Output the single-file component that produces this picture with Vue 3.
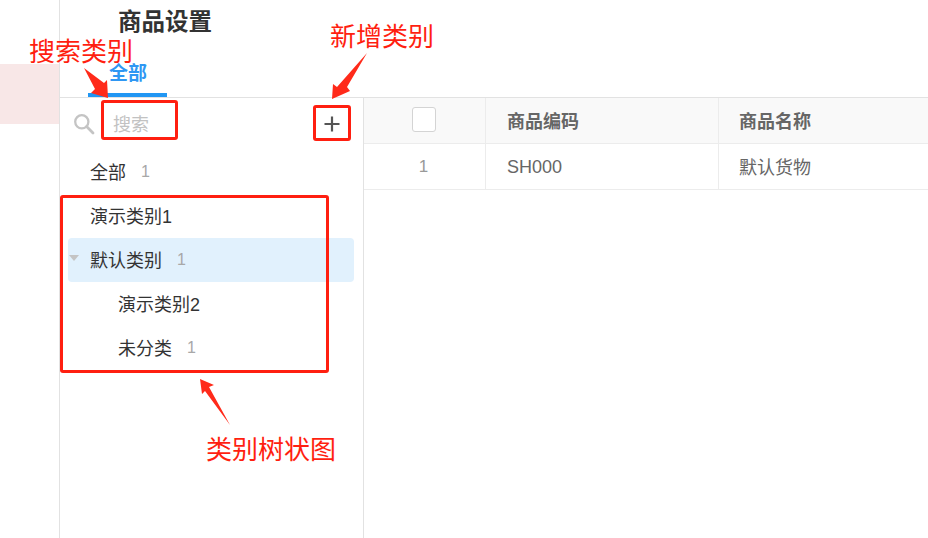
<script setup>
const tree = [
  { name: '全部', count: 1, level: 0 },
  { name: '演示类别1', level: 0 },
  { name: '默认类别', count: 1, level: 0, active: true, open: true },
  { name: '演示类别2', level: 1 },
  { name: '未分类', count: 1, level: 1 },
];
</script>

<template>
  <div class="page">
    <aside class="rail">
      <div class="rail-mark"></div>
    </aside>

    <main class="main">
      <header class="head">
        <h1 class="title">商品设置</h1>
        <nav class="tabs">
          <span class="tab">全部</span>
        </nav>
      </header>

      <div class="body">
        <section class="side">
          <div class="search">
            <svg class="search-icon" width="22" height="22" viewBox="0 0 22 22">
              <circle cx="7.8" cy="7.8" r="6.6" fill="none" stroke="#c4c4c4" stroke-width="2.3" />
              <path d="M12.6 12.6 L19 19" stroke="#c4c4c4" stroke-width="2.8" stroke-linecap="round" />
            </svg>
            <span class="search-text">搜索</span>
            <svg class="plus" width="16" height="16" viewBox="0 0 16 16">
              <path d="M8 0.5V15.5M0.5 8H15.5" stroke="#555" stroke-width="2.2" />
            </svg>
          </div>

          <ul class="tree">
            <li
              v-for="item in tree"
              :key="item.name"
              class="node"
              :class="{ active: item.active, child: item.level === 1 }"
            >
              <i v-if="item.open" class="caret"></i>
              <span class="node-name">{{ item.name }}</span>
              <span v-if="item.count" class="node-count">{{ item.count }}</span>
            </li>
          </ul>
        </section>

        <section class="table">
          <div class="row row-head">
            <div class="cell cell-check"><span class="checkbox"></span></div>
            <div class="cell cell-code">商品编码</div>
            <div class="cell cell-name">商品名称</div>
          </div>
          <div class="row">
            <div class="cell cell-check cell-index">1</div>
            <div class="cell cell-code cell-sku">SH000</div>
            <div class="cell cell-name">默认货物</div>
          </div>
        </section>
      </div>
    </main>

    <!-- red notes drawn on top of the screenshot -->
    <div class="note-box box-search"></div>
    <div class="note-box box-add"></div>
    <div class="note-box box-tree"></div>
    <span class="note note-search">搜索类别</span>
    <span class="note note-add">新增类别</span>
    <span class="note note-tree">类别树状图</span>
    <svg class="arrows" width="928" height="538" viewBox="0 0 928 538">
      <path d="M84 68 L104 83 L107 80 L108 98 L91 93 L95 89 Z" fill="#ff2a1a" />
      <path d="M367 53 L347 87 L350 91 L332 99 L333 84 L337 87 Z" fill="#ff2a1a" />
      <path d="M200 379 L214 385 L209 387 L230 425 L205 391 L202 394 Z" fill="#ff2a1a" />
    </svg>
  </div>
</template>

<style>
html,
body {
  margin: 0;
  background: #fff;
}
</style>

<style scoped>
.page {
  position: relative;
  display: flex;
  width: 928px;
  height: 538px;
  overflow: hidden;
  background: #fff;
  color: #333;
  font-family: "Liberation Sans", "Noto Sans CJK SC", sans-serif;
  font-size: 16px;
}

.rail {
  flex: none;
  width: 59px;
  padding-top: 64px;
  border-right: 1px solid #e2e2e2;
}

.rail-mark {
  height: 60px;
  background: #f8e7e7;
}

.main {
  flex: 1;
  display: flex;
  flex-direction: column;
  min-width: 0;
}

.head {
  flex: none;
  height: 97px;
  border-bottom: 1px solid #e2e2e2;
  display: flex;
  flex-direction: column;
}

.title {
  margin: 7px 0 0 58px;
  font-size: 23.5px;
  line-height: 30px;
  font-weight: 700;
  color: #333;
}

.tabs {
  margin-top: auto;
  margin-left: 28px;
}

.tab {
  display: block;
  width: 79px;
  height: 33px;
  padding-left: 21px;
  box-sizing: border-box;
  border-bottom: 4px solid #2196f3;
  font-size: 19px;
  line-height: 20px;
  font-weight: 700;
  color: #2f97f3;
}

.body {
  flex: 1;
  display: flex;
  min-height: 0;
}

.side {
  flex: none;
  width: 303px;
  border-right: 1px solid #e2e2e2;
}

.search {
  display: flex;
  align-items: center;
  height: 52px;
  padding: 0 14px;
}

.search-icon {
  flex: none;
  margin-top: 1px;
}

.search-text {
  margin-left: 17px;
  padding-bottom: 3px;
  font-size: 18px;
  color: #c2c2c2;
}

.plus {
  margin-left: auto;
  margin-right: 9px;
}

.tree {
  list-style: none;
  margin: 0;
  padding: 0 9px 0 8px;
}

.node {
  position: relative;
  display: flex;
  align-items: center;
  height: 44px;
  padding-left: 22px;
  padding-bottom: 2px;
  box-sizing: border-box;
  font-size: 18px;
  color: #333;
}

.node.child {
  padding-left: 50px;
}

.node.active {
  background: #e1f1fd;
  border-radius: 4px;
}

.caret {
  position: absolute;
  left: 1px;
  top: 17px;
  width: 0;
  height: 0;
  border-left: 5.5px solid transparent;
  border-right: 5.5px solid transparent;
  border-top: 6px solid #c4c4c4;
}

.node-count {
  margin-left: 15px;
  padding-top: 2px;
  font-size: 16px;
  color: #a8a8a8;
}

.table {
  flex: 1;
  min-width: 0;
}

.row {
  display: flex;
  height: 45px;
  border-bottom: 1px solid #ececec;
  color: #666;
}

.row-head {
  background: #f9f9f9;
  font-weight: 700;
}

.row-head .cell-code,
.cell-name {
  padding-bottom: 2px;
}

.cell {
  display: flex;
  align-items: center;
  padding-left: 21px;
  font-size: 18px;
}

.cell-check {
  width: 119px;
  padding-left: 0;
  padding-right: 2px;
  justify-content: center;
  border-right: 1px solid #ececec;
}

.cell-index {
  padding-top: 1px;
  font-size: 17px;
  color: #999;
}

.cell-sku {
  padding-top: 1px;
}

.checkbox {
  display: block;
  width: 22px;
  height: 23px;
  margin-top: -2px;
  background: #fff;
  border: 1px solid #d4d4d4;
  border-radius: 3px;
}

.cell-code {
  width: 211px;
  border-right: 1px solid #ececec;
}

.cell-name {
  flex: 1;
  padding-left: 20px;
}

.note-box {
  position: absolute;
  box-sizing: border-box;
  border: 3px solid #ff1f10;
  border-radius: 3px;
}

.box-search {
  left: 101px;
  top: 100px;
  width: 77px;
  height: 40px;
}

.box-add {
  left: 313px;
  top: 105px;
  width: 38px;
  height: 36px;
}

.box-tree {
  left: 60px;
  top: 195px;
  width: 269px;
  height: 178px;
}

.note {
  position: absolute;
  font-size: 26px;
  line-height: 24px;
  color: #ff1f10;
  white-space: nowrap;
}

.note-search {
  left: 29px;
  top: 40px;
}

.note-add {
  left: 330px;
  top: 25px;
}

.note-tree {
  left: 206px;
  top: 438px;
}

.arrows {
  position: absolute;
  left: 0;
  top: 0;
  pointer-events: none;
}
</style>
